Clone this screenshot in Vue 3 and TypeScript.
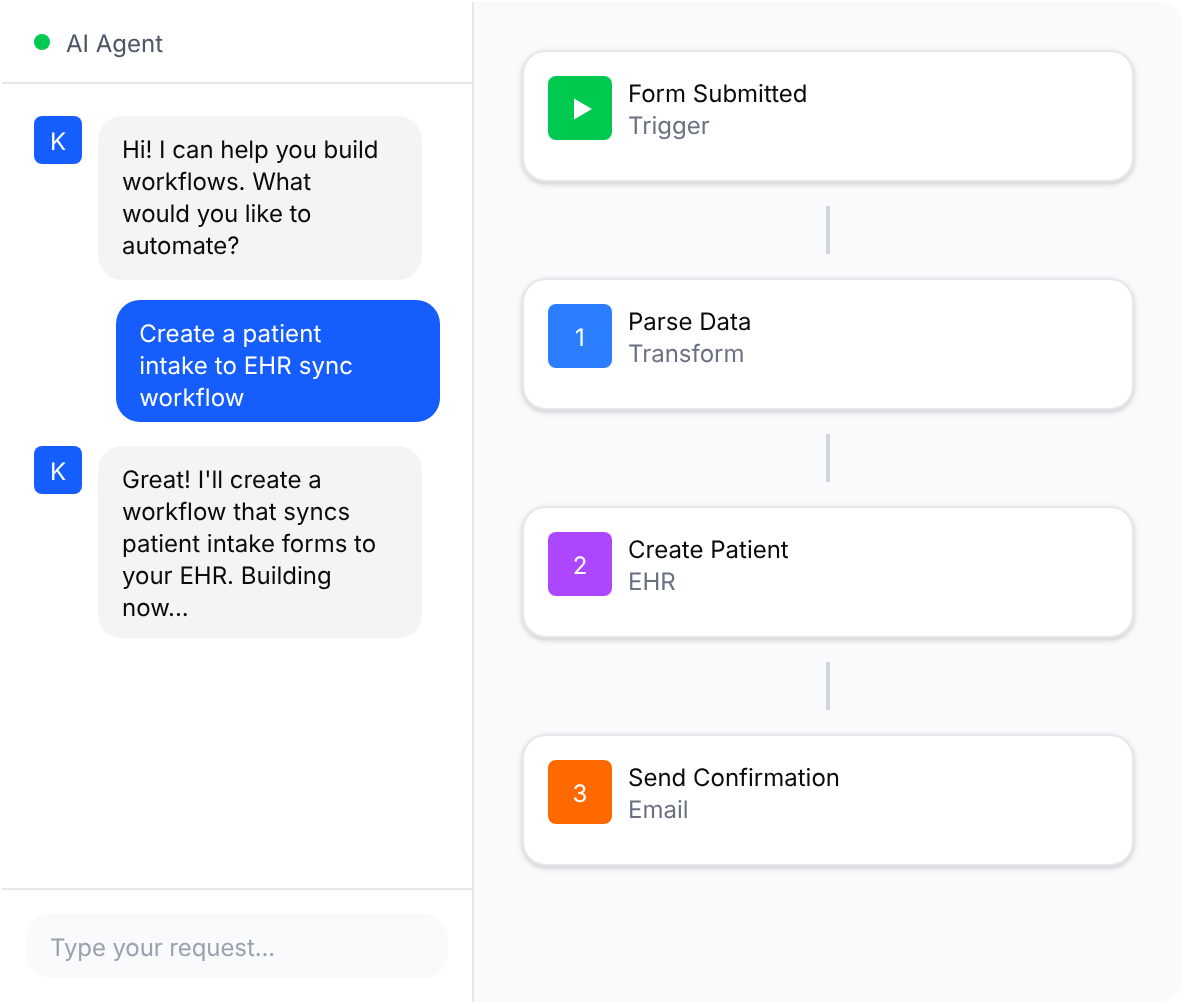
<script setup lang="ts">
interface Step { badge: string; color: string; title: string; sub: string; play?: boolean }
const steps: Step[] = [
  { badge: '', color: '#00c950', title: 'Form Submitted', sub: 'Trigger', play: true },
  { badge: '1', color: '#2b7fff', title: 'Parse Data', sub: 'Transform' },
  { badge: '2', color: '#ad46ff', title: 'Create Patient', sub: 'EHR' },
  { badge: '3', color: '#ff6900', title: 'Send Confirmation', sub: 'Email' },
]
</script>

<template>
  <div class="viewport">
    <div class="frame">
      <section class="chat">
        <header class="chat-head">
          <span class="dot"></span>
          <span class="agent">AI Agent</span>
        </header>
        <div class="messages">
          <div class="row first">
            <div class="avatar">K</div>
            <div class="bubble ai a1">Hi! I can help you build workflows. What<br />would you like to automate?</div>
          </div>
          <div class="row user">
            <div class="bubble me">Create a patient<br />intake to EHR sync workflow</div>
          </div>
          <div class="row third">
            <div class="avatar">K</div>
            <div class="bubble ai a3">Great! I'll create a workflow that syncs patient intake forms to your EHR. Building now...</div>
          </div>
        </div>
        <footer class="chat-foot">
          <div class="input"><span>Type your request...</span></div>
        </footer>
      </section>
      <section class="flow">
        <template v-for="(s, i) in steps" :key="s.title">
          <div v-if="i > 0" class="line"></div>
          <div class="card">
            <div class="badge" :style="{ background: s.color }">
              <svg v-if="s.play" class="play" width="9" height="11" viewBox="0 0 18 22"><path d="M0 0.5 L18 11 L0 21.5 Z" fill="#fff" /></svg>
              <span v-else>{{ s.badge }}</span>
            </div>
            <div class="card-text">
              <div class="title">{{ s.title }}</div>
              <div class="sub">{{ s.sub }}</div>
            </div>
          </div>
        </template>
      </section>
    </div>
  </div>
</template>

<style>
html, body { margin: 0; background: #fff; }
</style>

<style scoped>
.viewport {
  width: 1184px;
  height: 1004px;
  overflow: hidden;
}
.frame {
  box-sizing: border-box;
  width: 592px;
  height: 502px;
  transform: scale(2);
  transform-origin: 0 0;
  will-change: transform;
  text-rendering: geometricPrecision;
  -webkit-font-smoothing: antialiased;
  border: 1px solid #fff;
  border-radius: 12px;
  overflow: hidden;
  display: flex;
  font-family: Inter, "Liberation Sans", sans-serif;
  font-size: 12px;
  line-height: 16px;
  color: #0a0a0a;
  background: #fff;
}
.chat {
  box-sizing: border-box;
  width: 236px;
  flex: none;
  border-right: 1px solid #e5e7eb;
  display: flex;
  flex-direction: column;
}
.chat-head {
  box-sizing: border-box;
  height: 41px;
  border-bottom: 1px solid #e5e7eb;
  padding: 0 16px;
  display: flex;
  align-items: center;
  gap: 8px;
}
.dot { width: 8px; height: 8px; border-radius: 50%; background: #00c950; }
.agent { color: #4a5565; padding-top: 2px; }
.messages {
  flex: 1;
  padding: 16px 16px 0;
  display: flex;
  flex-direction: column;
}
.row { display: flex; gap: 8px; align-items: flex-start; }
.row.user { justify-content: flex-end; margin-top: 10px; }
.row.third { margin-top: 12px; }
.avatar {
  flex: none;
  width: 24px;
  height: 24px;
  border-radius: 4px;
  background: #155dfc;
  color: #fff;
  display: flex;
  align-items: center;
  justify-content: center;
  padding-top: 1px;
  box-sizing: border-box;
}
.bubble {
  box-sizing: border-box;
  max-width: 80%;
  padding: 9px 12px;
  border-radius: 12px;
}
.ai { background: #f3f4f6; }
.a1 { max-width: 162px; letter-spacing: -0.03px; }
.a3 { padding-bottom: 7px; }
.me { background: #155dfc; color: #fff; padding-bottom: 4px; letter-spacing: 0.05px; }
.chat-foot {
  box-sizing: border-box;
  height: 57px;
  border-top: 1px solid #e5e7eb;
  padding: 12px;
}
.input {
  box-sizing: border-box;
  height: 32px;
  border-radius: 12px;
  background: #f9fafb;
  color: #99a1af;
  padding: 2px 12px 0;
  display: flex;
  align-items: center;
  letter-spacing: -0.05px;
}
.flow {
  flex: 1;
  background: #f9fafb;
  padding: 24px;
  display: flex;
  flex-direction: column;
  align-items: stretch;
}
.card {
  box-sizing: border-box;
  height: 66px;
  border: 1px solid #e5e7eb;
  border-radius: 12px;
  background: #fff;
  padding: 12px;
  display: flex;
  gap: 8px;
  box-shadow: 0 1px 3px rgba(0, 0, 0, 0.12), 0 1px 2px rgba(0, 0, 0, 0.08);
}
.badge {
  flex: none;
  width: 32px;
  height: 32px;
  border-radius: 4px;
  display: flex;
  align-items: center;
  justify-content: center;
  color: #fff;
}
.play { margin: 1px 0 0 2px; }
.badge span { padding-top: 2px; }
.card-text { padding-top: 1px; }
.sub { color: #6a7282; }
.line {
  width: 2px;
  height: 24px;
  margin: 12px auto;
  background: #d1d5dc;
}
</style>
